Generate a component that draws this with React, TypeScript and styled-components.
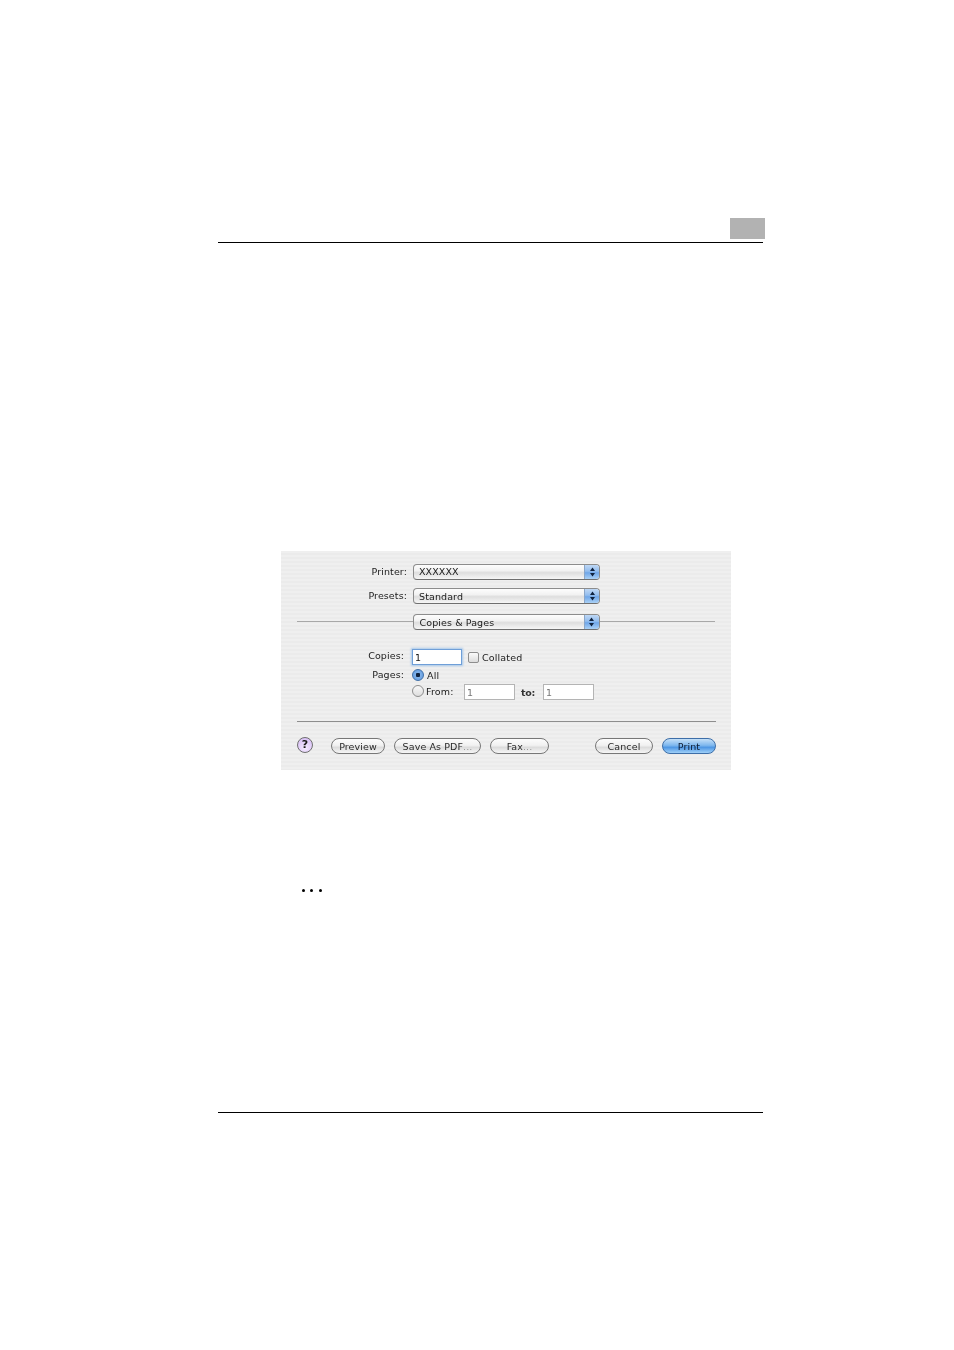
import React from "react";
import styled, { createGlobalStyle } from "styled-components";

const Global = createGlobalStyle`
  html, body { margin: 0; padding: 0; background: #fff; }
  body { font-family: "DejaVu Sans", "Liberation Sans", sans-serif; }
`;

const Page = styled.div`
  width: 954px;
  height: 1350px;
  padding-top: 218px;
  box-sizing: border-box;
  display: flex;
  flex-direction: column;
  overflow: hidden;
`;

const Header = styled.header`
  margin-left: 218px;
  width: 547px;
  display: flex;
  flex-direction: column;
  align-items: flex-end;
`;

const ChapterTab = styled.div`
  width: 35px;
  height: 21px;
  background: #b2b2b2;
`;

const Rule = styled.div`
  align-self: flex-start;
  width: 545px;
  height: 1px;
  background: #000;
  margin-top: 3px;
`;

const Dialog = styled.section`
  margin: 308px 0 0 281px;
  width: 450px;
  height: 219px;
  box-sizing: border-box;
  padding: 13px 15px 0 16px;
  background: repeating-linear-gradient(to bottom, #efefef 0 2px, #ebebeb 2px 4px);
  color: #1c1c1c;
  font-size: 9.5px;
  display: flex;
  flex-direction: column;
  filter: blur(0.4px);
`;

const SelectRow = styled.div<{ $gap: number }>`
  display: flex;
  align-items: center;
  height: 16px;
  margin-bottom: ${(p) => p.$gap}px;
`;

const SelectLabel = styled.span`
  width: 110px;
  text-align: right;
  letter-spacing: 0.1px;
  flex: none;
  margin-bottom: 2px;
`;

const SelectBox = styled.div<{ $offset?: boolean }>`
  margin-left: ${(p) => (p.$offset ? 0 : 6)}px;
  width: 187px;
  height: 16px;
  box-sizing: border-box;
  flex: none;
  display: flex;
  align-items: center;
  justify-content: space-between;
  border: 1px solid #8c8c8c;
  border-bottom-color: #6f6f6f;
  border-radius: 4px;
  padding-left: 5px;
  background: linear-gradient(to bottom, #fdfdfd 0%, #f2f2f2 40%, #dedede 55%, #f6f6f6 100%);
  overflow: hidden;
  letter-spacing: 0.1px;
`;

const SelectValue = styled.span<{ $lift?: number; $left?: number }>`
  margin-bottom: ${(p) => p.$lift ?? 0}px;
  margin-left: ${(p) => p.$left ?? 0}px;
`;

const Stepper = styled.span`
  width: 14px;
  height: 16px;
  flex: none;
  display: flex;
  align-items: center;
  justify-content: center;
  background: linear-gradient(to bottom, #c6dcf6 0%, #93bdee 45%, #6fa6e8 55%, #b4d8f8 100%);
  border-left: 1px solid #8aa6c8;
`;

const SectionLine = styled.span<{ $end?: number }>`
  flex: 1;
  height: 1px;
  background: #a8a8a8;
  margin-bottom: 2px;
  margin-right: ${(p) => p.$end ?? 0}px;
`;

const FormRow = styled.div<{ $height: number; $top?: number }>`
  display: flex;
  align-items: center;
  height: ${(p) => p.$height}px;
  margin-top: ${(p) => p.$top ?? 0}px;
`;

const FormLabel = styled.span<{ $lift?: number }>`
  width: 107px;
  flex: none;
  text-align: right;
  letter-spacing: 0.1px;
  margin-right: 8px;
  margin-bottom: ${(p) => p.$lift ?? 0}px;
`;

const TextField = styled.div<{ $focus?: boolean; $left?: number }>`
  width: ${(p) => (p.$focus ? 50 : 51)}px;
  height: 16px;
  box-sizing: border-box;
  margin-left: ${(p) => p.$left ?? 0}px;
  padding-left: 2px;
  line-height: 15px;
  background: #fff;
  color: ${(p) => (p.$focus ? "#111" : "#777")};
  border: 1px solid ${(p) => (p.$focus ? "#6f9fd8" : "#b4b4b4")};
  box-shadow: ${(p) => (p.$focus ? "0 0 2px 1px #a5c6ea" : "none")};
  flex: none;
`;

const CheckBox = styled.span`
  width: 11px;
  height: 11px;
  box-sizing: border-box;
  margin-left: 6px;
  border: 1px solid #8e8e8e;
  border-radius: 2px;
  background: linear-gradient(to bottom, #fbfbfb, #dcdcdc);
  flex: none;
`;

const Radio = styled.span<{ $on?: boolean; $lift?: number }>`
  width: 12px;
  height: 12px;
  box-sizing: border-box;
  border-radius: 50%;
  border: 1px solid ${(p) => (p.$on ? "#3f6fa8" : "#8e8e8e")};
  margin-bottom: ${(p) => p.$lift ?? 0}px;
  background: ${(p) =>
    p.$on
      ? "radial-gradient(circle, #10233f 0 2px, #7fb0e8 2.5px, #5a97e0 100%)"
      : "linear-gradient(to bottom, #f8f8f8, #dddddd)"};
  flex: none;
`;

const Inline = styled.span<{ $left: number; $width?: number; $bold?: boolean; $drop?: number; $lift?: number }>`
  margin-left: ${(p) => p.$left}px;
  ${(p) => (p.$width ? `width: ${p.$width}px;` : "")}
  flex: none;
  letter-spacing: ${(p) => (p.$bold ? "-0.3px" : "0.15px")};
  margin-top: ${(p) => p.$drop ?? 0}px;
  margin-bottom: ${(p) => p.$lift ?? 0}px;
  ${(p) => (p.$bold ? "font-weight: 600; color: #333;" : "")}
`;

const Divider = styled.div`
  height: 1px;
  background: #8e8e8e;
  margin-top: 21px;
`;

const Toolbar = styled.div`
  display: flex;
  align-items: center;
  height: 17px;
  margin-top: 15px;
`;

const Help = styled.span`
  width: 16px;
  height: 16px;
  box-sizing: border-box;
  border-radius: 50%;
  border: 1px solid #6f6f6f;
  background: radial-gradient(circle at 50% 70%, #f5ebff, #d2b6f4);
  display: flex;
  align-items: center;
  justify-content: center;
  font-size: 11px;
  font-weight: 700;
  color: #1a1a1a;
  flex: none;
  margin-bottom: 2px;
`;

const Pill = styled.span<{ $width: number; $left: number; $primary?: boolean }>`
  width: ${(p) => p.$width}px;
  margin-left: ${(p) => p.$left}px;
  height: 16px;
  box-sizing: border-box;
  padding-top: 1px;
  flex: none;
  border-radius: 8px;
  border: 1px solid ${(p) => (p.$primary ? "#3d6ea8" : "#777")};
  background: ${(p) =>
    p.$primary
      ? "linear-gradient(to bottom, #c5e0f8 0%, #7fb8ee 45%, #4f97e4 60%, #9fd0f8 100%)"
      : "linear-gradient(to bottom, #fcfcfc 0%, #f1f1f1 45%, #dcdcdc 60%, #f6f6f6 100%)"};
  display: flex;
  align-items: center;
  justify-content: center;
  letter-spacing: 0.1px;
  color: ${(p) => (p.$primary ? "#0c1a30" : "#2a2a2a")};
`;

const Faint = styled.span`
  color: #999;
`;

const Dots = styled.div`
  display: flex;
  gap: 5.4px;
  margin: 119px 0 0 302px;
`;

const Dot = styled.span`
  width: 3px;
  height: 3px;
  border-radius: 50%;
  background: #000;
`;

const FooterRule = styled.div`
  margin: 220px 0 0 218px;
  width: 545px;
  height: 1px;
  background: #000;
`;

const Arrows = () => (
  <svg width="7" height="10" viewBox="0 0 7 10">
    <path d="M3.5 0.5 L6 4 H1 Z M3.5 9.5 L6 6 H1 Z" fill="#10233f" />
  </svg>
);

const Select = ({ value, inline, lift }: { value: string; inline?: boolean; lift?: number }) => (
  <SelectBox $offset={inline}>
    <SelectValue $lift={lift} $left={inline ? 1 : 0}>{value}</SelectValue>
    <Stepper>
      <Arrows />
    </Stepper>
  </SelectBox>
);

export default function App() {
  return (
    <Page>
      <Global />
      <Header>
        <ChapterTab />
        <Rule />
      </Header>
      <Dialog>
        <SelectRow $gap={8}>
          <SelectLabel>Printer:</SelectLabel>
          <Select value="XXXXXX" lift={2} />
        </SelectRow>
        <SelectRow $gap={10}>
          <SelectLabel>Presets:</SelectLabel>
          <Select value="Standard" />
        </SelectRow>
        <SelectRow $gap={0}>
          <SectionLine />
          <Select value="Copies &amp; Pages" inline />
          <SectionLine $end={1} />
        </SelectRow>
        <FormRow $height={16} $top={19}>
          <FormLabel $lift={4}>Copies:</FormLabel>
          <TextField $focus>1</TextField>
          <CheckBox />
          <Inline $left={3}>Collated</Inline>
        </FormRow>
        <FormRow $height={14} $top={3}>
          <FormLabel $lift={2}>Pages:</FormLabel>
          <Radio $on />
          <Inline $left={3} $drop={1}>All</Inline>
        </FormRow>
        <FormRow $height={16} $top={2}>
          <FormLabel />
          <Radio $lift={2} />
          <Inline $left={2} $width={38} $lift={2}>From:</Inline>
          <TextField>1</TextField>
          <Inline $left={6} $width={22} $bold>to:</Inline>
          <TextField>1</TextField>
        </FormRow>
        <Divider />
        <Toolbar>
          <Help>?</Help>
          <Pill $width={54} $left={18}>Preview</Pill>
          <Pill $width={87} $left={9}>Save As PDF<Faint>...</Faint></Pill>
          <Pill $width={59} $left={9}>Fax<Faint>...</Faint></Pill>
          <Pill $width={58} $left={46}>Cancel</Pill>
          <Pill $width={54} $left={9} $primary>Print</Pill>
        </Toolbar>
      </Dialog>
      <Dots>
        <Dot />
        <Dot />
        <Dot />
      </Dots>
      <FooterRule />
    </Page>
  );
}
